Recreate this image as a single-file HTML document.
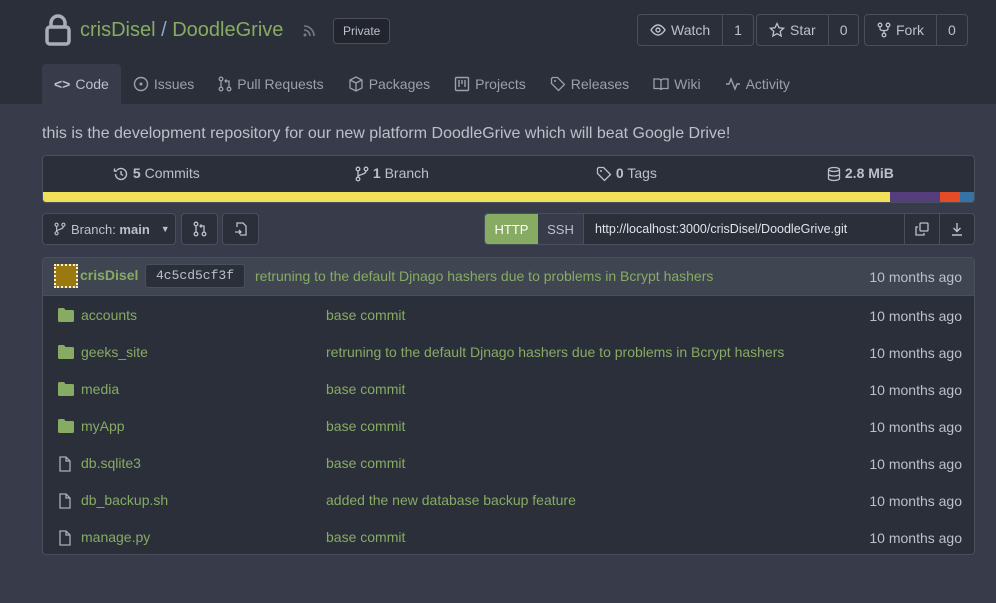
<!DOCTYPE html>
<html><head><meta charset="utf-8">
<style>
*{box-sizing:border-box;margin:0;padding:0}
body{width:996px;height:603px;background:#383c4a;font-family:"Liberation Sans","DejaVu Sans",sans-serif;color:#bbc0ca;font-size:14px;position:relative;overflow:hidden}
.top{position:absolute;left:0;top:0;width:996px;height:104px;background:#2b2f3a}
.abs{position:absolute}
.green{color:#87ab63}
svg{display:inline-block;vertical-align:middle}
.btn{position:absolute;border:1px solid #4a4f5d;border-radius:4px;height:32px;display:flex;align-items:center;background:#2b2f3a;font-size:14px;color:#bbc0ca}
.btn .a{padding:0 12px;display:flex;align-items:center;gap:5px;height:100%;border-right:1px solid #4a4f5d}
.btn .b{padding:0 11px}
.tabs{position:absolute;top:64px;left:42px;display:flex;height:40px;font-size:14px}
.tab{display:flex;align-items:center;gap:5px;padding:0 12px;color:#9aa0ac}
.tab.act{background:#383c4a;border-radius:4px 4px 0 0;color:#bbc0ca}
.stats{position:absolute;left:42px;top:155px;width:933px;height:48px;border:1px solid #4a4f5d;border-radius:4px;background:#2b2f3a;overflow:hidden}
.stats .it{position:absolute;top:9px;font-size:14px}
.list{position:absolute;left:42px;top:257px;width:933px;height:298px;border:1px solid #4a4f5d;border-radius:4px;background:#2b2f3a;overflow:hidden}
.row{position:absolute;left:0;width:931px;height:37px;font-size:14px}
.row .n{position:absolute;left:38px;top:10px;color:#87ab63}
.row .m{position:absolute;left:283px;top:10px;color:#87ab63}
.row .t{position:absolute;right:12px;top:11px;color:#bbc0ca}
.row .ic{position:absolute;left:15px;top:11px}
</style></head><body>
<div class="top"></div>
<svg class="abs" style="left:45px;top:14px" width="26" height="32" viewBox="0 0 26 32"><rect x="2" y="13" width="22" height="17" rx="3" fill="none" stroke="#a9adb8" stroke-width="3.5"/><path d="M6 13V9a7 7 0 0 1 14 0v4" fill="none" stroke="#a9adb8" stroke-width="3.5"/></svg>
<div class="abs" style="left:80px;top:19px;font-size:20px"><span class="green">crisDisel</span><span style="color:#8ea6c8"> / </span><span class="green">DoodleGrive</span></div>
<svg class="abs" style="left:302px;top:24px" width="14" height="14" viewBox="0 0 14 14"><circle cx="3" cy="11" r="1.5" fill="#777c88"/><path d="M2 6a6 6 0 0 1 6 6M2 2a10 10 0 0 1 10 10" fill="none" stroke="#777c88" stroke-width="1.6"/></svg>
<div class="abs" style="left:333px;top:18px;height:26px;border:1px solid #4a4f5d;border-radius:4px;padding:0 9px;line-height:24px;font-size:12px;background:#22252e">Private</div>

<div class="btn" style="left:637px;top:14px"><div class="a"><svg width="16" height="14" viewBox="0 0 16 14"><path d="M1 7s3-5 7-5 7 5 7 5-3 5-7 5-7-5-7-5z" fill="none" stroke="#bbc0ca" stroke-width="1.4"/><circle cx="8" cy="7" r="2" fill="none" stroke="#bbc0ca" stroke-width="1.4"/></svg>Watch</div><div class="b">1</div></div>
<div class="btn" style="left:756px;top:14px"><div class="a"><svg width="16" height="16" viewBox="0 0 16 16"><path d="M8 1.5l2 4.3 4.6.5-3.4 3.1 1 4.6L8 11.7 3.8 14l1-4.6L1.4 6.3 6 5.8z" fill="none" stroke="#bbc0ca" stroke-width="1.3"/></svg>Star</div><div class="b">0</div></div>
<div class="btn" style="left:864px;top:14px"><div class="a"><svg width="14" height="16" viewBox="0 0 14 16"><circle cx="3" cy="3" r="1.8" fill="none" stroke="#bbc0ca" stroke-width="1.3"/><circle cx="11" cy="3" r="1.8" fill="none" stroke="#bbc0ca" stroke-width="1.3"/><circle cx="7" cy="13" r="1.8" fill="none" stroke="#bbc0ca" stroke-width="1.3"/><path d="M3 5v1.5c0 1 1 2 2 2h4c1 0 2-1 2-2V5M7 8.5v2.7" fill="none" stroke="#bbc0ca" stroke-width="1.3"/></svg>Fork</div><div class="b">0</div></div>

<div class="tabs">
<div class="tab act"><span style="font-weight:bold">&lt;&gt;</span>Code</div>
<div class="tab"><svg width="16" height="16" viewBox="0 0 16 16"><circle cx="8" cy="8" r="6.5" fill="none" stroke="#9aa0ac" stroke-width="1.4"/><circle cx="8" cy="8" r="1.5" fill="#9aa0ac"/></svg>Issues</div>
<div class="tab"><svg width="14" height="16" viewBox="0 0 14 16"><circle cx="3" cy="3" r="1.8" fill="none" stroke="#9aa0ac" stroke-width="1.3"/><circle cx="3" cy="13" r="1.8" fill="none" stroke="#9aa0ac" stroke-width="1.3"/><circle cx="11" cy="13" r="1.8" fill="none" stroke="#9aa0ac" stroke-width="1.3"/><path d="M3 5v6M11 11V5H7M8.5 3.5L7 5l1.5 1.5" fill="none" stroke="#9aa0ac" stroke-width="1.3"/></svg>Pull Requests</div>
<div class="tab"><svg width="16" height="16" viewBox="0 0 16 16"><path d="M8 1l6 3v8l-6 3-6-3V4zM2 4l6 3 6-3M8 7v8" fill="none" stroke="#9aa0ac" stroke-width="1.3"/></svg>Packages</div>
<div class="tab"><svg width="16" height="16" viewBox="0 0 16 16"><rect x="1.5" y="1.5" width="13" height="13" rx="1" fill="none" stroke="#9aa0ac" stroke-width="1.4"/><path d="M5 4v7M8 4v4M11 4v7" stroke="#9aa0ac" stroke-width="1.4"/></svg>Projects</div>
<div class="tab"><svg width="16" height="16" viewBox="0 0 16 16"><path d="M1.5 2.5v5l7 7 6-6-7-7h-5z" fill="none" stroke="#9aa0ac" stroke-width="1.3"/><circle cx="5" cy="5" r="1" fill="#9aa0ac"/></svg>Releases</div>
<div class="tab"><svg width="16" height="14" viewBox="0 0 16 14"><path d="M1 2h5c1 0 2 1 2 2v9c0-1-1-1.5-2-1.5H1zM15 2h-5c-1 0-2 1-2 2v9c0-1 1-1.5 2-1.5h5z" fill="none" stroke="#9aa0ac" stroke-width="1.3"/></svg>Wiki</div>
<div class="tab"><svg width="16" height="14" viewBox="0 0 16 14"><path d="M1 7h3l2-5 4 10 2-5h3" fill="none" stroke="#9aa0ac" stroke-width="1.4"/></svg>Activity</div>
</div>

<div class="abs" style="left:42px;top:125px;font-size:16px;color:#bbc0ca">this is the development repository for our new platform DoodleGrive which will beat Google Drive!</div>

<div class="stats">
<div class="it" style="left:70px"><svg width="16" height="16" viewBox="0 0 16 16"><path d="M2.5 8a5.5 5.5 0 1 0 1.6-3.9M1.5 2.5v2.5H4" fill="none" stroke="#bbc0ca" stroke-width="1.4"/><path d="M8 5v3l2 1.5" fill="none" stroke="#bbc0ca" stroke-width="1.4"/></svg> <b>5</b> Commits</div>
<div class="it" style="left:312px"><svg width="14" height="16" viewBox="0 0 14 16"><circle cx="3" cy="3" r="1.8" fill="none" stroke="#bbc0ca" stroke-width="1.3"/><circle cx="11" cy="3" r="1.8" fill="none" stroke="#bbc0ca" stroke-width="1.3"/><circle cx="3" cy="13" r="1.8" fill="none" stroke="#bbc0ca" stroke-width="1.3"/><path d="M3 5v6M11 5c0 4-8 3-8 6" fill="none" stroke="#bbc0ca" stroke-width="1.3"/></svg> <b>1</b> Branch</div>
<div class="it" style="left:553px"><svg width="16" height="16" viewBox="0 0 16 16"><path d="M1.5 2.5v5l7 7 6-6-7-7h-5z" fill="none" stroke="#bbc0ca" stroke-width="1.3"/><circle cx="5" cy="5" r="1" fill="#bbc0ca"/></svg> <b>0</b> Tags</div>
<div class="it" style="left:784px"><svg width="14" height="16" viewBox="0 0 14 16"><ellipse cx="7" cy="3.5" rx="5.5" ry="2" fill="none" stroke="#bbc0ca" stroke-width="1.3"/><path d="M1.5 3.5v9c0 1.1 2.5 2 5.5 2s5.5-.9 5.5-2v-9M1.5 8c0 1.1 2.5 2 5.5 2s5.5-.9 5.5-2" fill="none" stroke="#bbc0ca" stroke-width="1.3"/></svg> <b>2.8 MiB</b></div>
<div class="abs" style="left:0;top:36px;height:10px;width:847px;background:#f1e05a"></div>
<div class="abs" style="left:847px;top:36px;height:10px;width:50px;background:#563d7c"></div>
<div class="abs" style="left:897px;top:36px;height:10px;width:20px;background:#e34c26"></div>
<div class="abs" style="left:917px;top:36px;height:10px;width:16px;background:#3572a5"></div>
</div>

<div class="btn" style="left:42px;top:213px;width:134px;padding-left:11px;gap:5px"><svg width="12" height="16" viewBox="0 0 14 16"><circle cx="3" cy="3" r="1.8" fill="none" stroke="#bbc0ca" stroke-width="1.3"/><circle cx="11" cy="3" r="1.8" fill="none" stroke="#bbc0ca" stroke-width="1.3"/><circle cx="3" cy="13" r="1.8" fill="none" stroke="#bbc0ca" stroke-width="1.3"/><path d="M3 5v6M11 5c0 4-8 3-8 6" fill="none" stroke="#bbc0ca" stroke-width="1.3"/></svg><span style="font-size:13px">Branch: <b>main</b></span><span style="font-size:9px;margin-left:6px">▼</span></div>
<div class="btn" style="left:181px;top:213px;width:37px;justify-content:center"><svg width="14" height="16" viewBox="0 0 14 16"><circle cx="3" cy="3" r="1.8" fill="none" stroke="#bbc0ca" stroke-width="1.3"/><circle cx="3" cy="13" r="1.8" fill="none" stroke="#bbc0ca" stroke-width="1.3"/><circle cx="11" cy="13" r="1.8" fill="none" stroke="#bbc0ca" stroke-width="1.3"/><path d="M3 5v6M11 11V5H7M8.5 3.5L7 5l1.5 1.5" fill="none" stroke="#bbc0ca" stroke-width="1.3"/></svg></div>
<div class="btn" style="left:222px;top:213px;width:37px;justify-content:center"><svg width="16" height="16" viewBox="0 0 16 16"><path d="M4 6V2h6l3 3v9H7" fill="none" stroke="#bbc0ca" stroke-width="1.3"/><path d="M2 11h6M6 9l2 2-2 2" fill="none" stroke="#bbc0ca" stroke-width="1.3"/></svg></div>

<div class="btn" style="left:484px;top:213px;width:491px;overflow:hidden">
<div style="background:#87ab63;color:#fff;height:100%;width:53px;display:flex;align-items:center;justify-content:center;font-size:13px">HTTP</div>
<div style="height:100%;width:46px;display:flex;align-items:center;justify-content:center;font-size:13px;border-right:1px solid #4a4f5d;background:#383c4a">SSH</div>
<div style="flex:1;padding-left:11px;font-size:12.5px;color:#e0e3e8;background:#2b2f3a;height:100%;display:flex;align-items:center">http://localhost:3000/crisDisel/DoodleGrive.git</div>
<div style="width:35px;height:100%;border-left:1px solid #4a4f5d;display:flex;align-items:center;justify-content:center"><svg width="14" height="14" viewBox="0 0 14 14"><rect x="5" y="1" width="8" height="8" rx="1" fill="none" stroke="#bbc0ca" stroke-width="1.3"/><path d="M3 5H1v8h8v-2" fill="none" stroke="#bbc0ca" stroke-width="1.3"/></svg></div>
<div style="width:35px;height:100%;border-left:1px solid #4a4f5d;display:flex;align-items:center;justify-content:center"><svg width="14" height="14" viewBox="0 0 14 14"><path d="M7 1v8M3.5 6L7 9.5 10.5 6M2 13h10" fill="none" stroke="#bbc0ca" stroke-width="1.4"/></svg></div>
</div>

<div class="list">
<div class="row" style="top:0;height:38px;background:#404552;border-bottom:1px solid #4a4f5d">
<div class="abs" style="left:11px;top:6px;width:24px;height:24px;background:#9a7a10;border:2px dotted #f5f0e0"></div>
<div class="abs" style="left:37px;top:9px;color:#87ab63;font-weight:bold">crisDisel</div>
<div class="abs" style="left:102px;top:6px;height:24px;border:1px solid #4a4f5d;border-radius:3px;background:#2b2f3a;padding:0 10px;line-height:22px;font-family:'Liberation Mono',monospace;font-size:13px">4c5cd5cf3f</div>
<div class="abs" style="left:212px;top:10px;color:#87ab63">retruning to the default Djnago hashers due to problems in Bcrypt hashers</div>
<div class="t">10 months ago</div>
</div>
<div class="row" style="top:39px"><svg class="ic" width="16" height="14" viewBox="0 0 16 14"><path d="M0 1.5Q0 0 1.5 0H6l1.5 2h7Q16 2 16 3.5v9Q16 14 14.5 14h-13Q0 14 0 12.5z" fill="#87ab63"/></svg><div class="n">accounts</div><div class="m">base commit</div><div class="t">10 months ago</div></div>
<div class="row" style="top:76px"><svg class="ic" width="16" height="14" viewBox="0 0 16 14"><path d="M0 1.5Q0 0 1.5 0H6l1.5 2h7Q16 2 16 3.5v9Q16 14 14.5 14h-13Q0 14 0 12.5z" fill="#87ab63"/></svg><div class="n">geeks_site</div><div class="m">retruning to the default Djnago hashers due to problems in Bcrypt hashers</div><div class="t">10 months ago</div></div>
<div class="row" style="top:113px"><svg class="ic" width="16" height="14" viewBox="0 0 16 14"><path d="M0 1.5Q0 0 1.5 0H6l1.5 2h7Q16 2 16 3.5v9Q16 14 14.5 14h-13Q0 14 0 12.5z" fill="#87ab63"/></svg><div class="n">media</div><div class="m">base commit</div><div class="t">10 months ago</div></div>
<div class="row" style="top:150px"><svg class="ic" width="16" height="14" viewBox="0 0 16 14"><path d="M0 1.5Q0 0 1.5 0H6l1.5 2h7Q16 2 16 3.5v9Q16 14 14.5 14h-13Q0 14 0 12.5z" fill="#87ab63"/></svg><div class="n">myApp</div><div class="m">base commit</div><div class="t">10 months ago</div></div>
<div class="row" style="top:187px"><svg class="ic" width="14" height="16" viewBox="0 0 14 16"><path d="M2 1h6l4 4v10H2z M8 1v4h4" fill="none" stroke="#a9adb8" stroke-width="1.3"/></svg><div class="n">db.sqlite3</div><div class="m">base commit</div><div class="t">10 months ago</div></div>
<div class="row" style="top:224px"><svg class="ic" width="14" height="16" viewBox="0 0 14 16"><path d="M2 1h6l4 4v10H2z M8 1v4h4" fill="none" stroke="#a9adb8" stroke-width="1.3"/></svg><div class="n">db_backup.sh</div><div class="m">added the new database backup feature</div><div class="t">10 months ago</div></div>
<div class="row" style="top:261px"><svg class="ic" width="14" height="16" viewBox="0 0 14 16"><path d="M2 1h6l4 4v10H2z M8 1v4h4" fill="none" stroke="#a9adb8" stroke-width="1.3"/></svg><div class="n">manage.py</div><div class="m">base commit</div><div class="t">10 months ago</div></div>
</div>
</body></html>
